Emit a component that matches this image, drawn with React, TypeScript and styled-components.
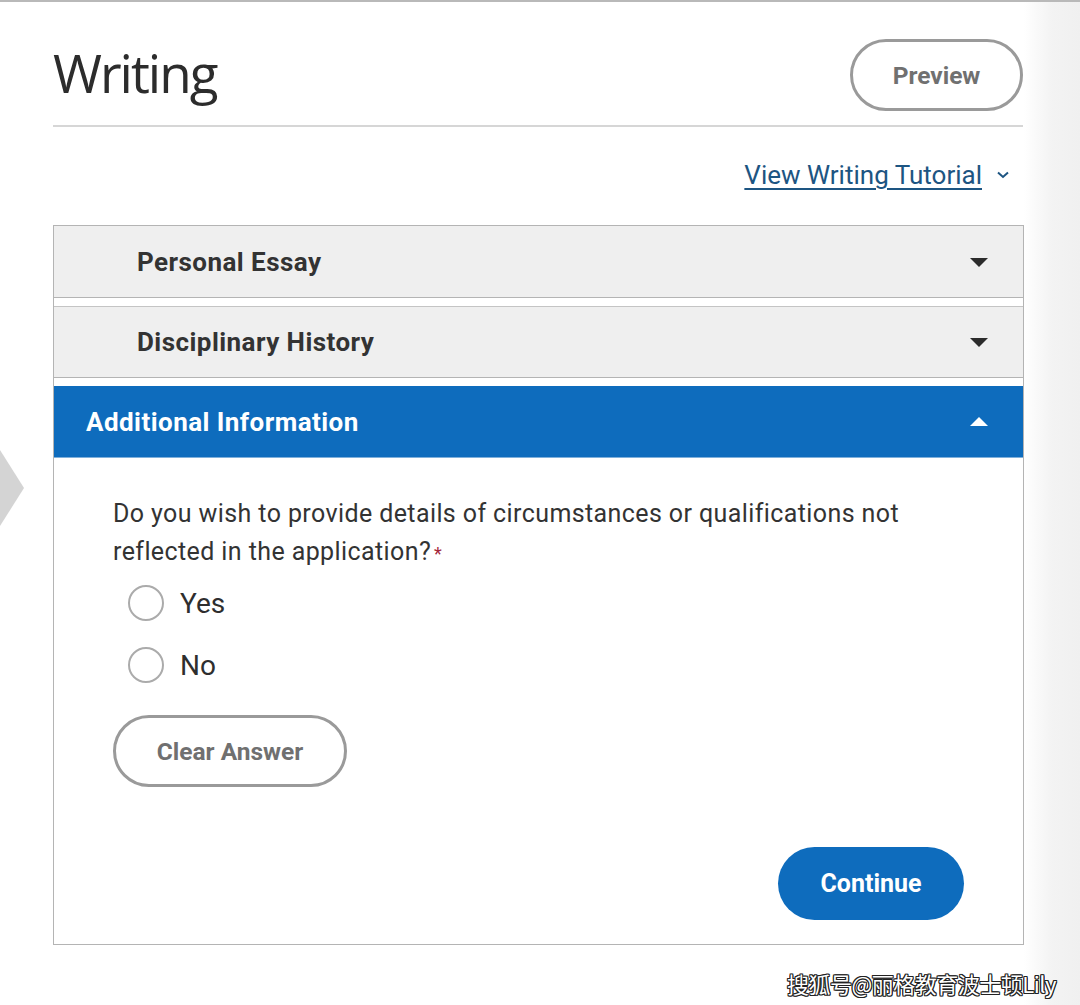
import styled, { createGlobalStyle } from "styled-components";

const GlobalStyle = createGlobalStyle`
  html, body {
    margin: 0;
    padding: 0;
    background: #ffffff;
  }
  body {
    font-family: Roboto, "Liberation Sans", Arial, sans-serif;
    color: #333333;
  }
  * {
    box-sizing: border-box;
  }
`;

type Section = {
  title: string;
  open: boolean;
};

const sections: Section[] = [
  { title: "Personal Essay", open: false },
  { title: "Disciplinary History", open: false },
  { title: "Additional Information", open: true },
];

function Caret({ up, color }: { up?: boolean; color: string }) {
  return (
    <svg width="18" height="10" viewBox="0 0 18 10">
      {up ? (
        <polygon points="0,9 18,9 9,0" fill={color} />
      ) : (
        <polygon points="0,1 18,1 9,10" fill={color} />
      )}
    </svg>
  );
}

function App() {
  return (
    <Page>
      <GlobalStyle />
      <LeftGutter>
        <svg width="24" height="76" viewBox="0 0 24 76">
          <polygon points="0,0 24,38 0,76" fill="#d4d4d4" />
        </svg>
      </LeftGutter>
      <Main>
        <Header>
          <Title>Writing</Title>
          <OutlineButton $width={173}>Preview</OutlineButton>
        </Header>
        <TutorialRow>
          <TutorialLink href="#">View Writing Tutorial</TutorialLink>
          <svg width="14" height="8" viewBox="0 0 14 8">
            <polyline
              points="2,1.5 7,6 12,1.5"
              fill="none"
              stroke="#1d5582"
              strokeWidth="2"
            />
          </svg>
        </TutorialRow>
        <Accordion>
          {sections.map((s) => (
            <SectionHeader key={s.title} $open={s.open}>
              <SectionTitle $open={s.open}>{s.title}</SectionTitle>
              <Caret up={s.open} color={s.open ? "#ffffff" : "#2b2b2b"} />
            </SectionHeader>
          ))}
          <Panel>
            <Question>
              Do you wish to provide details of circumstances or qualifications not
              reflected in the application?<Required>*</Required>
            </Question>
            <RadioList>
              <RadioRow>
                <RadioCircle />
                <RadioLabel>Yes</RadioLabel>
              </RadioRow>
              <RadioRow>
                <RadioCircle />
                <RadioLabel>No</RadioLabel>
              </RadioRow>
            </RadioList>
            <OutlineButton $width={234}>Clear Answer</OutlineButton>
            <Footer>
              <PrimaryButton>Continue</PrimaryButton>
            </Footer>
          </Panel>
        </Accordion>
        <Watermark>搜狐号@丽格教育波士顿Lily</Watermark>
      </Main>
      <RightGutter />
    </Page>
  );
}

const Page = styled.div`
  display: flex;
  width: 1080px;
  min-height: 1005px;
  border-top: 2px solid #b9b9b9;
`;

const LeftGutter = styled.div`
  width: 53px;
  flex-shrink: 0;
  padding-top: 448px;
`;

const RightGutter = styled.div`
  flex: 1;
  background: linear-gradient(
    to right,
    #ffffff 0%,
    #fafafa 20%,
    #f3f3f3 50%,
    #f0f0f0 100%
  );
`;

const Main = styled.div`
  width: 971px;
  flex-shrink: 0;
  display: flex;
  flex-direction: column;
`;

const Header = styled.div`
  display: flex;
  align-items: flex-start;
  justify-content: space-between;
  height: 125px;
  border-bottom: 2px solid #d6d6d6;
  padding-top: 37px;
  margin-right: 1px;
`;

const Title = styled.h1`
  margin: 7px 0 0 0;
  font-family: "Open Sans", "Noto Sans", sans-serif;
  font-weight: 400;
  font-size: 53px;
  letter-spacing: -2px;
  color: #2c2c2c;
  line-height: 1;
`;

const OutlineButton = styled.button<{ $width: number }>`
  width: ${(p) => p.$width}px;
  height: 72px;
  border: 3px solid #9a9a9a;
  border-radius: 36px;
  background: #ffffff;
  color: #707070;
  font-family: Roboto, "Liberation Sans", sans-serif;
  font-weight: 700;
  font-size: 24.5px;
  cursor: pointer;
  padding: 0;
`;

const TutorialRow = styled.div`
  display: flex;
  align-items: center;
  justify-content: flex-end;
  gap: 14px;
  height: 98px;
  padding-right: 14px;
  padding-bottom: 2px;
`;

const TutorialLink = styled.a`
  font-family: Roboto, "Liberation Sans", sans-serif;
  font-size: 26px;
  color: #1d5582;
  text-decoration: underline;
  text-underline-offset: 4px;
  text-decoration-thickness: 2px;
`;

const Accordion = styled.div`
  border: 1px solid #b4b4b4;
  display: flex;
  flex-direction: column;
  gap: 8px;
  background: #ffffff;
`;

const SectionHeader = styled.div<{ $open: boolean }>`
  height: 72px;
  display: flex;
  align-items: center;
  justify-content: space-between;
  padding: 0 35px 0 ${(p) => (p.$open ? 32 : 83)}px;
  background: ${(p) => (p.$open ? "#0e6cbd" : "#efefef")};
  border-bottom: 1px solid ${(p) => (p.$open ? "#7fb0db" : "#b4b4b4")};
  border-top: 1px solid ${(p) => (p.$open ? "#0e6cbd" : "#c4c4c4")};
  &:first-child {
    border-top: none;
  }
`;

const SectionTitle = styled.span<{ $open: boolean }>`
  font-family: Roboto, "Liberation Sans", sans-serif;
  font-weight: 700;
  font-size: 26px;
  letter-spacing: 0.45px;
  color: ${(p) => (p.$open ? "#ffffff" : "#333333")};
`;

const Panel = styled.div`
  display: flex;
  flex-direction: column;
  align-items: flex-start;
  padding: 37px 59px 24px 59px;
  margin-top: -8px;
`;

const Question = styled.p`
  margin: 0;
  font-family: Roboto, "Liberation Sans", sans-serif;
  font-size: 25px;
  letter-spacing: 0.4px;
  line-height: 38px;
  color: #333333;
`;

const Required = styled.span`
  color: #a3263a;
  font-size: 18px;
  margin-left: 3px;
`;

const RadioList = styled.div`
  display: flex;
  flex-direction: column;
  gap: 26px;
  padding: 12px 0 32px 15px;
`;

const RadioRow = styled.label`
  display: flex;
  align-items: center;
  gap: 16px;
  height: 36px;
`;

const RadioCircle = styled.span`
  width: 36px;
  height: 36px;
  border-radius: 50%;
  border: 2px solid #ababab;
  background: #ffffff;
`;

const RadioLabel = styled.span`
  font-family: Roboto, "Liberation Sans", sans-serif;
  font-size: 28px;
  color: #2e2e2e;
`;

const Footer = styled.div`
  align-self: stretch;
  display: flex;
  justify-content: flex-end;
  padding-top: 60px;
`;

const PrimaryButton = styled.button`
  width: 186px;
  height: 73px;
  border: none;
  border-radius: 37px;
  background: #0e6cbd;
  color: #ffffff;
  font-family: Roboto, "Liberation Sans", sans-serif;
  font-weight: 700;
  font-size: 25px;
  cursor: pointer;
`;

const Watermark = styled.div`
  position: relative;
  z-index: 1;
  align-self: flex-end;
  margin-top: 22px;
  margin-right: -32px;
  font-family: "Noto Sans CJK SC", sans-serif;
  font-size: 22px;
  color: #ffffff;
  letter-spacing: -0.5px;
  text-shadow: -1px -1px 0 #222, 1px -1px 0 #222, -1px 1px 0 #222, 1px 1px 0 #222,
    0 1px 0 #222, 0 -1px 0 #222, 1px 0 0 #222, -1px 0 0 #222;
`;

export default App;
